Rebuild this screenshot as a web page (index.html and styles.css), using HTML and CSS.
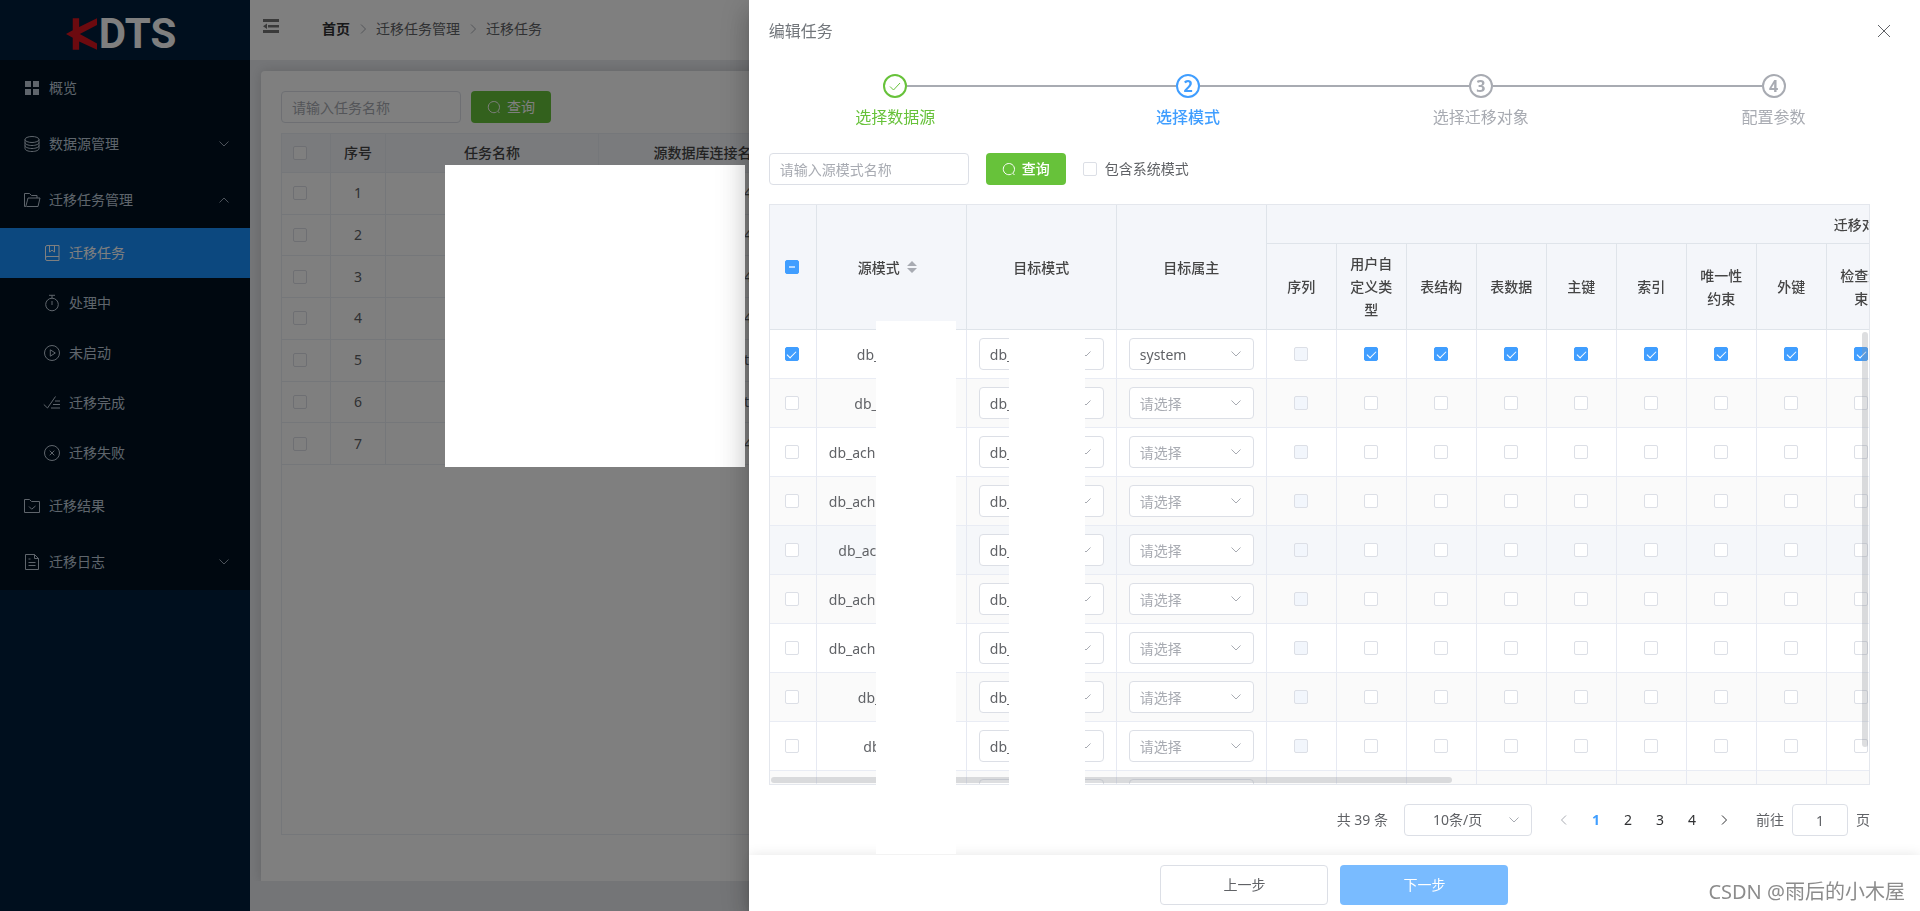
FILE: index.html
```html
<!DOCTYPE html>
<html lang="zh-CN">
<head>
<meta charset="utf-8">
<title>KDTS</title>
<link rel="stylesheet" href="styles.css">
</head>
<body>
<svg class="sprite" aria-hidden="true">
  <symbol id="down" viewBox="0 0 12 12"><path d="M1.5 3.5 6 8l4.500-4.500"/></symbol>
  <symbol id="search" viewBox="0 0 14 14"><path d="M10.700 11.200A5.600 5.600 0 1 0 9.600 12M10.400 10.900l2.100 2.100"/></symbol>
  <symbol id="right" viewBox="0 0 12 12"><path d="M4 1.500 8.500 6 4 10.500"/></symbol>
</svg>
<div class="app">
  <aside class="sidebar">
    <div class="logo">
      <svg class="logo-mark" viewBox="199 56 92 94" aria-hidden="true"><path d="M219 56h19v26l53-26v20l-51 27 51 28v19l-53-25v25h-19v-36l-20-11 20-11z"/></svg>
      <span>DTS</span>
    </div>
    <nav class="menu">
      <a href="#" class="item"><svg class="ico solid" viewBox="0 0 18 18"><path d="M2 2h6v6H2zM10 2h6v6h-6zM2 10h6v6H2zM10 10h6v6h-6z"/></svg><span>概览</span></a>
      <a href="#" class="item"><svg class="ico" viewBox="0 0 18 18"><ellipse cx="9" cy="4.500" rx="7" ry="3"/><path d="M2 4.500v9c0 1.700 3.100 3 7 3s7-1.300 7-3v-9M2 7.500c0 1.700 3.100 3 7 3s7-1.300 7-3M2 10.500c0 1.700 3.100 3 7 3s7-1.300 7-3"/></svg><span>数据源管理</span><svg class="arrow"><use href="#down"/></svg></a>
      <a href="#" class="item"><svg class="ico" viewBox="0 0 18 18"><path d="M3.500 15.500h11.500L17 7H5L2.800 15.500H1.500v-13h5l2 2H14V7"/></svg><span>迁移任务管理</span><svg class="arrow up"><use href="#down"/></svg></a>
      <a href="#" class="item sub active"><svg class="ico" viewBox="0 0 18 18"><path d="M16 1.500H4A1.800 1.800 0 0 0 2.500 3v12A1.500 1.500 0 0 0 4 16.500h12v-15M16 12.500H4A1.600 1.600 0 0 0 2.500 14M6.500 1.500v6.500L9 6.200 11.500 8V1.500"/></svg><span>迁移任务</span></a>
      <a href="#" class="item sub"><svg class="ico" viewBox="0 0 18 18"><circle cx="9" cy="10.500" r="6.300"/><path d="M6 1.300h6M9 1.300v3M9 7v4"/></svg><span>处理中</span></a>
      <a href="#" class="item sub"><svg class="ico" viewBox="0 0 18 18"><circle cx="9" cy="9" r="7.500"/><path d="M7.300 5.800v6.400l5-3.200z"/></svg><span>未启动</span></a>
      <a href="#" class="item sub"><svg class="ico" viewBox="0 0 18 18"><path d="M.8 10.500 4.500 14 12.500 2.500M12 7h5M10 10.500h7M8 14h9"/></svg><span>迁移完成</span></a>
      <a href="#" class="item sub"><svg class="ico" viewBox="0 0 18 18"><circle cx="9" cy="9" r="7.500"/><path d="m6.700 6.700 4.600 4.600M11.300 6.700l-4.600 4.600"/></svg><span>迁移失败</span></a>
      <a href="#" class="item"><svg class="ico" viewBox="0 0 18 18"><path d="M1.500 2.500h5l2 2h8v11h-15zM6 9.500l2.700 2.700L12.500 9"/></svg><span>迁移结果</span></a>
      <a href="#" class="item"><svg class="ico" viewBox="0 0 18 18"><path d="M2.500 1.500h9l4 4v11h-13zM11.500 1.500v4h4M5.500 6h2M5.500 9.500h7M5.500 12.500h7"/></svg><span>迁移日志</span><svg class="arrow"><use href="#down"/></svg></a>
    </nav>
  </aside>
  <div class="main">
    <header class="topbar">
      <button class="fold" type="button" aria-label="折叠菜单"><svg viewBox="0 0 18 16"><path d="M1 1h16v3H1zM6 7h11v2.500H6zM1 8.200 5 5.400V11zM1 12h16v3H1z"/></svg></button>
      <nav class="crumbs"><a href="#" class="home">首页</a><svg class="sep"><use href="#right"/></svg><a href="#">迁移任务管理</a><svg class="sep"><use href="#right"/></svg><span>迁移任务</span></nav>
    </header>
    <div class="workspace">
      <section class="card">
        <form class="filters">
          <input class="text-input task-input" type="text" aria-label="任务名称" placeholder="请输入任务名称">
          <button class="btn green" type="button"><svg><use href="#search"/></svg>查询</button>
        </form>
        <div class="tasks">
          <table class="task-table">
            <thead><tr><th class="pick"><input class="check" type="checkbox" aria-label="全选任务"></th><th class="num">序号</th><th class="name">任务名称</th><th class="conn">源数据库连接名称</th><th></th></tr></thead>
            <tbody id="task-rows"></tbody>
          </table>
        </div>
      </section>
    </div>
  </div>
</div>
<div class="overlay"></div>
<div class="patch patch-tasks"></div>

<section class="drawer" role="dialog" aria-labelledby="drawer-title">
  <header class="drawer-head">
    <h1 id="drawer-title">编辑任务</h1>
    <button class="close" type="button" aria-label="关闭"><svg viewBox="0 0 14 14"><path d="m1 1 12 12M13 1 1 13"/></svg></button>
  </header>
  <ol class="steps">
    <li class="step done"><span class="dot"><svg viewBox="0 0 14 14"><path d="m2 7.500 3.500 3.500L12 4"/></svg></span><span>选择数据源</span></li>
    <li class="step current"><span class="dot">2</span><span>选择模式</span></li>
    <li class="step"><span class="dot">3</span><span>选择迁移对象</span></li>
    <li class="step"><span class="dot">4</span><span>配置参数</span></li>
  </ol>
  <div class="drawer-body">
    <form class="filters schema-filters">
      <input class="text-input schema-input" type="text" aria-label="源模式名称" placeholder="请输入源模式名称">
      <button class="btn green strong" type="button"><svg><use href="#search"/></svg>查询</button>
      <label class="check-label"><input class="check" type="checkbox">包含系统模式</label>
    </form>
    <div class="schemas">
      <table class="schema-table">
        <colgroup><col class="c-pick"><col class="c-wide" span="3"><col class="c-obj" span="9"><col></colgroup>
        <thead>
          <tr class="group-row"><th rowspan="2"><input id="all-schemas" class="check" type="checkbox" aria-label="全选模式"></th><th rowspan="2" class="sorted"><span class="sortable">源模式<svg viewBox="0 0 10 14"><path d="M5 1 10 6H0zM5 13l5-5H0z"/></svg></span></th><th rowspan="2">目标模式</th><th rowspan="2">目标属主</th><th colspan="10">迁移对象</th></tr>
          <tr class="object-row"><th>序列</th><th>用户自定义类型</th><th>表结构</th><th>表数据</th><th>主键</th><th>索引</th><th>唯一性约束</th><th>外键</th><th>检查约束</th><th></th></tr>
        </thead>
        <tbody id="schema-rows"></tbody>
      </table>
      <span class="thumb-y"></span>
      <span class="thumb-x"></span>
    </div>
    <nav class="pager" aria-label="分页">
      <span>共 39 条</span>
      <span class="select page-size"><select aria-label="每页条数"><option>10条/页</option></select><svg><use href="#down"/></svg></span>
      <span class="pages"><button type="button" aria-label="上一页" disabled><svg class="flip"><use href="#right"/></svg></button><button type="button" class="on">1</button><button type="button">2</button><button type="button">3</button><button type="button">4</button><button type="button" aria-label="下一页"><svg><use href="#right"/></svg></button></span>
      <label class="jump">前往<input class="text-input" type="text" value="1">页</label>
    </nav>
  </div>
  <footer class="drawer-foot">
    <button class="btn plain" type="button">上一步</button>
    <button class="btn blue" type="button">下一步</button>
  </footer>
</section>
<div class="patch patch-source"></div>
<div class="patch patch-target"></div>
<div class="watermark">CSDN @雨后的小木屋</div>
<script src="app.js"></script>
</body>
</html>
```
FILE: styles.css
```css
* { box-sizing: border-box; }
body {
  margin: 0;
  height: 100vh;
  overflow: hidden;
  font: 14px/20px "Noto Sans", "Noto Sans CJK SC", sans-serif;
  color: #606266;
}
a { color: inherit; text-decoration: none; }
button, input, select { font: inherit; color: inherit; }
button { padding: 0; border: 0; background: none; }
svg { flex: none; fill: none; stroke: currentColor; }
.sprite { display: none; }

.app { display: flex; height: 100%; }
.sidebar { width: 250px; flex: none; background: #001f3c; color: #bfcbd9; }
.logo {
  display: flex; align-items: center; justify-content: center; gap: 2px;
  height: 60px; padding-top: 8px; padding-right: 8px;
  color: #fff; font: bold 42px/52px Roboto, sans-serif;
}
.logo-mark { width: 31px; height: 32px; fill: #d9141e; stroke: none; }
.menu { background: #001120; }
.item { display: flex; align-items: center; height: 56px; padding: 0 20px 0 23px; gap: 8px; }
.item.sub { height: 50px; padding-left: 43px; }
.item.active { background: #1890ff; color: #fff; }
.ico { width: 18px; height: 18px; stroke-width: 1; }
.ico.solid { fill: currentColor; stroke: none; }
.arrow { width: 12px; height: 12px; margin-left: auto; opacity: .8; }
.up { transform: rotate(180deg); }

.main { flex: 1; min-width: 0; display: flex; flex-direction: column; background: #e9ebef; }
.topbar { display: flex; align-items: center; gap: 42px; height: 60px; flex: none; padding: 0 12px 2px; background: #fff; }
.fold { align-self: flex-start; margin-top: 18px; color: #757575; }
.fold svg { display: block; width: 18px; height: 16px; fill: currentColor; stroke: none; }
.crumbs { display: flex; align-items: center; gap: 7px; }
.home { font-weight: bold; color: #303133; }
.sep { width: 12px; height: 12px; color: #a8abb2; }
.workspace { flex: 1; display: flex; margin-bottom: 30px; padding: 11px 11px 0; overflow: hidden; }
.card {
  flex: 1; display: flex; flex-direction: column; gap: 10px;
  padding: 20px 20px 46px;
  border-radius: 4px 4px 0 0; background: #fff; box-shadow: 0 0 12px rgba(0, 0, 0, .15);
}
.filters { display: flex; align-items: center; gap: 10px; }
.text-input {
  height: 32px; padding: 0 10px; border: 1px solid #dcdfe6; border-radius: 4px; background: #fff;
}
.text-input::placeholder { color: #a8abb2; }
.task-input { width: 180px; }
.btn {
  display: flex; align-items: center; justify-content: center; gap: 6px;
  height: 32px; border-radius: 4px; border: 1px solid transparent;
}
.btn svg { width: 14px; height: 14px; }
.green { width: 80px; background: #67c23a; color: #fff; }
.strong { font-weight: 500; }
.tasks { flex: 1; border: 1px solid #ebeef5; }

table { border-collapse: separate; border-spacing: 0; table-layout: fixed; }
th, td { padding: 0 12px; border-right: 1px solid #ebeef5; border-bottom: 1px solid #ebeef5; text-align: center; }
th { font-weight: 500; color: #454545; background: #f4f6fa; }
.task-table { width: 100%; height: 331px; }
.task-table thead tr { height: 39px; }
.task-table .pick { width: 49px; padding-left: 11px; text-align: left; }
.task-table .num { width: 55px; }
.task-table .name { width: 213px; }
.task-table .conn { width: 222px; }
.task-table td.source { padding-left: 137px; text-align: left; }

.check {
  appearance: none; display: block; flex: none; width: 14px; height: 14px; margin: 0;
  border: 1px solid #dcdfe6; border-radius: 2px; background: #fff;
}
.check:checked, .check:indeterminate { border-color: #409eff; background: #409eff; }
.check:checked::after {
  content: ""; display: block; width: 4px; height: 8px; margin: 1px auto;
  border: solid #fff; border-width: 0 1px 1px 0; transform: rotate(45deg);
}
.check:indeterminate::after { content: ""; display: block; width: 6px; height: 2px; margin: 5px auto; background: #b3d8ff; }
.check:disabled { background: #f2f6fc; }

.overlay { position: fixed; inset: 0; background: rgba(0, 0, 0, .5); }
.patch { position: fixed; background: #fff; }
.patch-tasks { left: 445px; top: 165px; width: 300px; height: 302px; }
.patch-source { left: 876px; top: 321px; width: 80px; height: 533px; }
.patch-target { left: 1009px; top: 334px; width: 76px; height: 466px; }

.drawer {
  position: fixed; inset: 0 0 0 auto; width: 61%;
  display: flex; flex-direction: column; background: #fff;
  box-shadow: 0 8px 10px -5px rgba(0, 0, 0, .2), 0 16px 24px 2px rgba(0, 0, 0, .14), 0 6px 30px 5px rgba(0, 0, 0, .12);
}
.drawer-head { display: flex; align-items: center; justify-content: space-between; padding: 19px 29px 0 20px; }
.drawer-head h1 { margin: 0; font: inherit; font-size: 16px; line-height: 24px; color: #72767b; }
.close { display: flex; color: #606266; }
.close svg { width: 14px; height: 14px; }
.steps { display: grid; grid-template-columns: repeat(4, 1fr); margin: 31px 0 17px; padding: 0; list-style: none; }
.step {
  display: grid; grid-template-columns: 1fr 24px 1fr; align-items: center;
  color: #a8abb2; font-size: 16px; line-height: 38px; text-align: center;
}
.step::before, .step::after { content: ""; grid-row: 1; height: 2px; background: #a8abb2; }
.step::before { grid-column: 1; }
.step::after { grid-column: 3; }
.step:first-child::before, .step:last-child::after { background: none; }
.step > span:last-of-type { grid-column: 1 / -1; }
.dot {
  grid-area: 1 / 2; display: flex; align-items: center; justify-content: center;
  height: 24px; border: 2px solid; border-radius: 50%; font-weight: bold; line-height: 20px;
}
.dot svg { width: 14px; height: 14px; }
.done { color: #67c23a; }
.current { color: #409eff; font-weight: 500; }

.drawer-body { flex: 1; min-height: 0; display: flex; flex-direction: column; gap: 19px; padding: 0 50px 19px 20px; }
.schema-filters { gap: 17px; }
.schema-input { width: 200px; }
.check-label { display: flex; align-items: center; gap: 8px; }
.schemas { position: relative; flex: 1; min-height: 0; overflow: hidden; border: 1px solid #e4e7ed; }
.schema-table { width: 1688px; line-height: 23px; }
.schema-table th, .schema-table td { border-right-color: #e6e9f2; border-bottom-color: #e9ecf4; }
.schema-table th { border-color: #dfe4ea; }
.schema-table td { padding: 8px 12px; }
.schema-table th:first-child[rowspan], .schema-table td:first-child { padding-right: 14px; }
.schema-table .check { margin: 0 auto; }
.schema-table .sorted { padding-right: 20px; }
.group-row { height: 39px; }
.object-row { height: 86px; }
.c-pick { width: 47px; }
.c-wide { width: 150px; }
.c-obj { width: 70px; }
.schema-table tbody tr:nth-child(even) { background: #fafafa; }
.schema-table tbody tr.hover { background: #f5f7fa; }
.sortable { display: inline-flex; align-items: center; gap: 7px; }
.sortable svg { width: 10px; height: 14px; fill: #a8abb2; stroke: none; }
.schema-name { display: block; margin: 0 auto; text-align: left; white-space: nowrap; }
.thumb-x, .thumb-y { position: absolute; border-radius: 3px; background: rgba(144, 147, 153, .3); }
.thumb-x { left: 1px; bottom: 1px; width: 62%; height: 6px; }
.thumb-y { right: 1px; top: 127px; width: 6px; height: 415px; }

.select { display: grid; align-items: center; }
.select select, .select svg { grid-area: 1 / 1; }
.select select {
  appearance: none; width: 100%; height: 32px; padding: 0 10px;
  border: 1px solid #dcdfe6; border-radius: 4px; background: #fff;
}
.select select.empty { color: #a8abb2; }
.select svg { width: 12px; height: 12px; margin-right: 12px; justify-self: end; color: #a8abb2; pointer-events: none; }

.pager { display: flex; align-items: center; justify-content: flex-end; gap: 16px; }
.page-size { width: 128px; }
.page-size select { padding: 0 28px; }
.pages { display: flex; color: #303133; }
.pages button { display: flex; align-items: center; justify-content: center; width: 32px; height: 32px; }
.pages svg { width: 12px; height: 12px; }
.pages .on { color: #409eff; font-weight: bold; }
.pages button:disabled { color: #a8abb2; }
.flip { transform: rotate(180deg); }
.jump { display: flex; align-items: center; gap: 8px; }
.jump input { width: 56px; text-align: center; }
.drawer-foot { display: flex; justify-content: center; gap: 12px; padding: 10px 0 6px; box-shadow: 0 0 12px rgba(0, 0, 0, .1); background: #fff; }
.drawer-foot .btn { width: 168px; height: 40px; }
.plain { border-color: #dcdfe6; background: #fff; }
.blue { background: #79bbff; color: #fff; }

.watermark { position: fixed; right: 15px; bottom: 6px; font-size: 20px; line-height: 26px; color: #8c8c8c; text-shadow: 1px 1px 1px #fff; }
```
FILE: app.js
```js
const tasks = ["34", "34", "74", "74", "4t", "4t", "74"];
document.getElementById("task-rows").innerHTML = tasks.map((source, i) => `
  <tr>
    <td class="pick"><input class="check" type="checkbox" aria-label="任务 ${i + 1}"></td>
    <td>${i + 1}</td><td></td><td class="source">${source}</td><td></td>
  </tr>`).join("");

const schemas = [
  { name: "db_", width: 69, owner: "system", checked: true },
  { name: "db_", width: 74 },
  { name: "db_ach", width: 125 },
  { name: "db_ach", width: 125 },
  { name: "db_ac", width: 106, hover: true },
  { name: "db_ach", width: 125 },
  { name: "db_ach", width: 125 },
  { name: "db_", width: 67 },
  { name: "db", width: 56 },
  { name: "", width: 0 }
];

const box = (label, checked, disabled) =>
  `<input class="check" type="checkbox" aria-label="${label}"${checked ? " checked" : ""}${disabled ? " disabled" : ""}>`;

const dropdown = (label, value) =>
  `<span class="select"><select aria-label="${label}"${value === "请选择" ? ' class="empty"' : ""}><option>${value}</option></select><svg><use href="#down"/></svg></span>`;

document.getElementById("schema-rows").innerHTML = schemas.map(s => `
  <tr${s.hover ? ' class="hover"' : ""}>
    <td>${box("选择模式", s.checked)}</td>
    <td><span class="schema-name" style="width:${s.width}px">${s.name}</span></td>
    <td>${dropdown("目标模式", "db_")}</td>
    <td>${dropdown("目标属主", s.owner || "请选择")}</td>
    ${Array.from({ length: 9 }, (_, i) => `<td>${box("迁移对象", s.checked && i > 0, i === 0)}</td>`).join("")}
    <td></td>
  </tr>`).join("");

document.getElementById("all-schemas").indeterminate = true;
```
